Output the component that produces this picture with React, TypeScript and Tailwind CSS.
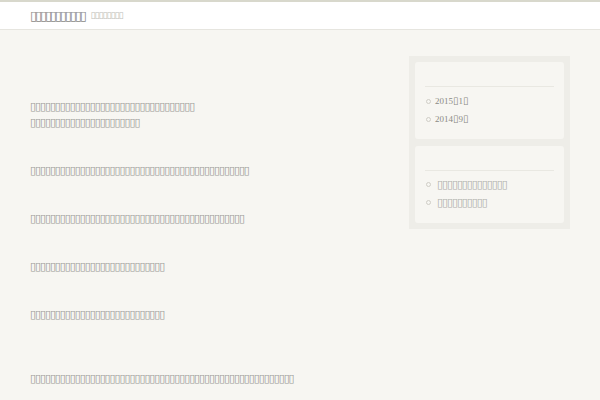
const box = (n: number) => "\u25AF".repeat(n);

function Tofu({ n, className = "" }: { n: number; className?: string }) {
  return (
    <span className={`font-['DejaVu_Sans',sans-serif] ${className}`}>{box(n)}</span>
  );
}

function Line({ n }: { n: number }) {
  return (
    <div className="h-[16px] font-['DejaVu_Sans',sans-serif] text-[11px] leading-[16px] tracking-[-1.08px] text-[#9a9a96]">
      {box(n)}
    </div>
  );
}

function Widget({ items, lift = "" }: { items: React.ReactNode[]; lift?: string }) {
  return (
    <div className="h-[77px] rounded-[3px] bg-[#f7f6f2] px-[10px] pt-[24px]">
      <div className="border-t border-[#e9e8e2]" />
      <ul className={lift || "pt-[5px]"}>
        {items.map((t, i) => (
          <li key={i} className="flex h-[18px] items-center">
            <span className="ml-[1px] h-[5px] w-[5px] rounded-full border border-[#cfcdc6]" />
            <span className="ml-[4px] text-[9px] leading-none text-[#8a8a85]">{t}</span>
          </li>
        ))}
      </ul>
    </div>
  );
}

export default function App() {
  const paras = [[33, 22], [44], [43], [27], [27]];
  return (
    <div className="min-h-[400px] bg-[#f7f6f2] font-['Liberation_Serif',serif]">
      <header className="h-[30px] border-t-2 border-b border-t-[#d8d8cc] border-b-[#e6e5df] bg-white">
        <div className="flex h-full items-center pb-[1px] pl-[30px]">
          <Tofu n={11} className="text-[13px] leading-none tracking-[-2.19px] text-[#8a8a86]" />
          <Tofu n={8} className="ml-[6px] text-[9px] leading-none tracking-[-0.98px] text-[#bdbdb8]" />
        </div>
      </header>
      <div className="flex">
        <main className="w-[379px] shrink-0 pl-[30px] pt-[69px]">
          {paras.map((lines, i) => (
            <div key={i} className="mb-[32px]">
              {lines.map((n, j) => (
                <Line key={j} n={n} />
              ))}
            </div>
          ))}
          <div className="pt-[16px]">
            <Line n={53} />
          </div>
        </main>
        <aside className="ml-[30px] mt-[26px] flex h-[173px] w-[161px] flex-col gap-[7px] bg-[#eeede8] p-[6px]">
          <Widget
            items={[
              <>2015<Tofu n={1} className="text-[10px]" />1<Tofu n={1} className="text-[10px]" /></>,
              <>2014<Tofu n={1} className="text-[10px]" />9<Tofu n={1} className="text-[10px]" /></>,
            ]}
          />
          <Widget
            lift="pt-[4px]"
            items={[
              <Tofu n={14} className="ml-[2px] text-[11px] tracking-[-1.08px] text-[#aeaeaa]" />,
              <Tofu n={10} className="ml-[2px] text-[11px] tracking-[-1.08px] text-[#aeaeaa]" />,
            ]}
          />
        </aside>
      </div>
    </div>
  );
}
